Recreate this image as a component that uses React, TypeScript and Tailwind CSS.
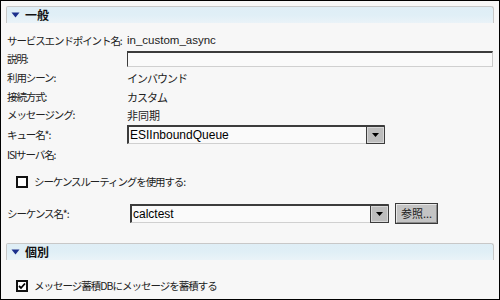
import React from "react";

const font = { fontFamily: '"Noto Sans CJK JP", "Liberation Sans", sans-serif' };

const SectionHeader = ({ title }: { title: string }) => (
  <div className="mx-[5px] h-[17px] flex items-center rounded-tr-[3px] rounded-tl-[2px] border-t border-l border-r border-[#c8c8c8] bg-gradient-to-b from-[#dfeef6] via-[#e0eff6] to-[#eaf3f8]">
    <svg width="9" height="6" viewBox="0 0 9 6" className="ml-[4px] mr-[5px]">
      <path d="M0.5 0.5 L8.5 0.5 L4.5 5.5 Z" fill="#1b2f8c" />
    </svg>
    <span className="text-[12px] font-bold text-[#111] leading-none">{title}</span>
  </div>
);

const Row = ({ label, children, h = "h-[18px]" }: { label: string; children?: React.ReactNode; h?: string }) => (
  <div className={`flex items-center ${h}`}>
    <div className="w-[126px] pl-[6px] shrink-0 whitespace-nowrap text-[10.5px] tracking-[-1.1px]">{label}</div>
    {children}
  </div>
);

const Select = ({ value, w }: { value: string; w: string }) => (
  <div className={`${w} h-[19px] flex bg-[#fafafa] border-t-2 border-l-2 border-[#3c3c3c] border-b border-r border-b-[#d0d0d0] border-r-[#d0d0d0]`}>
    <div className="flex-1 pl-[1px] leading-[16px] text-[12px] text-black" style={{ fontFamily: '"Liberation Sans", sans-serif' }}>
      {value}
    </div>
    <div className="w-[17px] h-[16px] bg-[#bdbdbd] border border-[#d8d8d8] outline outline-1 outline-[#3c3c3c] flex items-center justify-center">
      <svg width="7" height="4" viewBox="0 0 7 4">
        <path d="M0 0 L7 0 L3.5 4 Z" fill="#000" />
      </svg>
    </div>
  </div>
);

export default function App() {
  return (
    <div
      className="w-[500px] h-[300px] border border-black bg-[#f7f7f7] pt-[5px] text-[11px] text-[#222] overflow-hidden"
      style={font}
    >
      <SectionHeader title="一般" />
      <div className="mt-[9px]">
        <Row label="サービスエンドポイント名:">
          <span style={{ fontFamily: '"Liberation Sans", sans-serif' }} className="text-[11.5px]">in_custom_async</span>
        </Row>
        <Row label="説明:">
          <div className="w-[366px] h-[16px] bg-[#fafafa] border-t-2 border-l border-[#3c3c3c] border-b border-r border-b-[#d0d0d0] border-r-[#c8c8c8]" />
        </Row>
        <Row label="利用シーン:" h="h-[18px] mt-[1px]">
          <span className="tracking-[-1px]">インバウンド</span>
        </Row>
        <Row label="接続方式:" h="h-[18px] mt-[1px]">
          <span className="tracking-[-1px]">カスタム</span>
        </Row>
        <Row label="メッセージング:">
          <span>非同期</span>
        </Row>
        <Row label="キュー名*:" h="h-[19px] mt-[1px]">
          <Select value="ESIInboundQueue" w="w-[258px]" />
        </Row>
        <Row label="ISIサーバ名:" h="h-[18px] mt-[2px]" />
        <div className="flex items-center h-[18px] mt-[9px] pl-[15px]">
          <div className="w-[12px] h-[12px] border-2 border-[#111] bg-white" />
          <span className="ml-[6px] text-[10.5px] tracking-[-1.1px]">シーケンスルーティングを使用する:</span>
        </div>
        <div className="flex items-center h-[21px] mt-[12px]">
          <div className="w-[129px] pl-[6px] shrink-0 whitespace-nowrap text-[10.5px] tracking-[-1.1px]">シーケンス名*:</div>
          <Select value="calctest" w="w-[259px]" />
          <div className="ml-[6px] w-[43px] h-[21px] bg-[#c4c4c4] border border-[#3a3a3a] flex items-center justify-center">
            <div className="w-full h-full border border-t-[#e8e8e8] border-l-[#e8e8e8] border-b-[#8a8a8a] border-r-[#8a8a8a] flex items-center justify-center text-[11px] text-[#222]">
              参照...
            </div>
          </div>
        </div>
      </div>
      <div className="mt-[19px]">
        <SectionHeader title="個別" />
      </div>
      <div className="flex items-center h-[18px] mt-[17px] pl-[15px]">
        <div className="w-[12px] h-[12px] border-2 border-[#111] bg-white flex items-center justify-center">
          <svg width="8" height="8" viewBox="0 0 8 8">
            <path d="M1 4 L3 6 L7 1.5" stroke="#000" strokeWidth="1.8" fill="none" />
          </svg>
        </div>
        <span className="ml-[6px] text-[10.5px] tracking-[-1px]">メッセージ蓄積DBにメッセージを蓄積する</span>
      </div>
    </div>
  );
}
